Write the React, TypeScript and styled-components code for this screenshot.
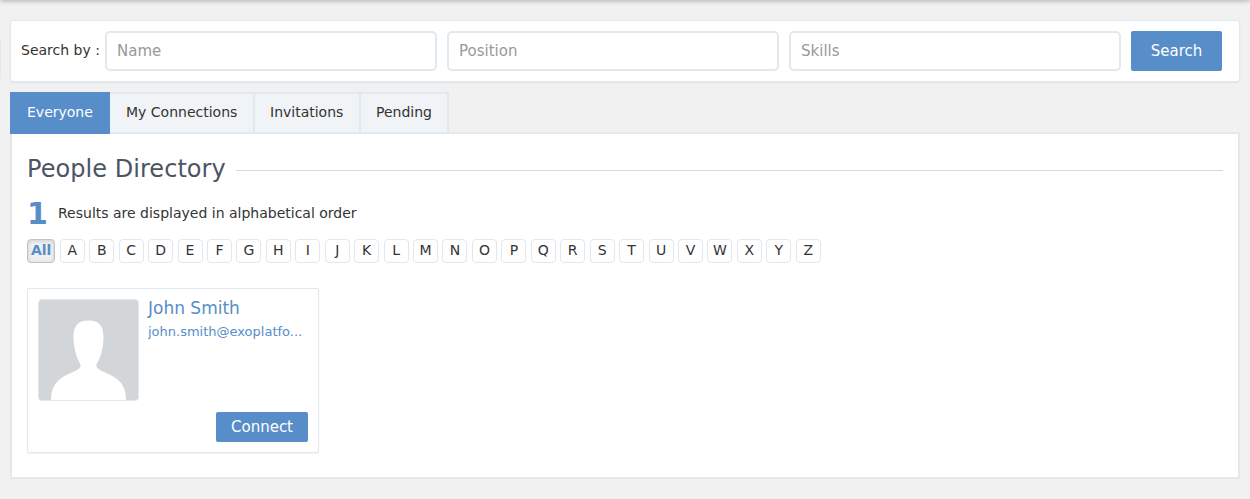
import React from "react";
import styled, { createGlobalStyle } from "styled-components";

const GlobalStyle = createGlobalStyle`
  * { box-sizing: border-box; }
  html, body { margin: 0; background: #f1f1f1; }
  body {
    font-family: "DejaVu Sans", sans-serif;
    font-size: 14px;
    line-height: 20px;
    color: #333;
    overflow: hidden;
  }
`;

const Page = styled.div`
  position: relative;
  height: 499px;
  padding: 20px 10px;
`;

const TopShadow = styled.div`
  position: absolute;
  top: -10px;
  left: 0;
  right: 0;
  height: 10px;
  box-shadow: 0 1px 5px rgba(0, 0, 0, 0.28);
`;

const SideHandle = styled.div`
  position: absolute;
  top: 39px;
  left: 0;
  width: 1px;
  height: 40px;
  background: #e8e8e8;
`;

const SearchBar = styled.form`
  display: flex;
  align-items: center;
  height: 62px;
  padding: 0 17px 0 10px;
  background: #fff;
  border: 1px solid #e1e8ee;
  border-radius: 3px;
  box-shadow: 0 1px 2px rgba(0, 0, 0, 0.06);
`;

const SearchLabel = styled.label`
  width: 84px;
  padding-bottom: 2px;
  white-space: nowrap;
`;

const Field = styled.input`
  width: 332px;
  height: 40px;
  margin-right: 10px;
  padding: 0 10px;
  border: 2px solid #e1e8ee;
  border-radius: 5px;
  background: #fff;
  font: 15px/20px "DejaVu Sans", sans-serif;
  outline: none;
  &::placeholder { color: #999; opacity: 1; }
`;

const Button = styled.button<{ $width: number; $height: number }>`
  width: ${(p) => p.$width}px;
  height: ${(p) => p.$height}px;
  flex: none;
  padding: 0;
  border: 0;
  border-radius: 2px;
  background: #578dc9;
  color: #fff;
  font: 15px/20px "DejaVu Sans", sans-serif;
`;

const Tabs = styled.nav`
  display: flex;
  height: 42px;
  margin-top: 10px;
`;

const Tab = styled.a<{ $active?: boolean; $width: number; $inset?: number }>`
  width: ${(p) => p.$width}px;
  padding: ${(p) => (p.$active ? 10 : 8)}px 0 0 ${(p) => p.$inset ?? 15}px;
  background: ${(p) => (p.$active ? "#578dc9" : "#f0f4f7")};
  color: ${(p) => (p.$active ? "#fff" : "#333")};
  border: solid #e1e8ee;
  border-width: ${(p) => (p.$active ? "0" : "2px 2px 2px 0")};
  white-space: nowrap;
`;

const Panel = styled.main`
  height: 347px;
  margin-top: -2px;
  padding: 20px 15px 0;
  background: #fff;
  border: 2px solid #e1e8ee;
  border-radius: 0 0 2px 2px;
`;

const PanelWrap = styled.section`
  display: flex;
  flex-direction: column;
  ${Tabs} { z-index: 1; }
`;

const Heading = styled.div`
  display: flex;
  align-items: center;
  height: 30px;
  &::after {
    content: "";
    flex: 1;
    height: 1px;
    margin: 3px 0 0 10px;
    background: #d8d8d8;
  }
`;

const Title = styled.h4`
  margin: 0;
  width: 199px;
  font-size: 24px;
  letter-spacing: 0.05px;
  white-space: nowrap;
  font-weight: normal;
  line-height: 30px;
  color: #4d5466;
`;

const Summary = styled.div`
  display: flex;
  align-items: center;
  height: 30px;
  margin-top: 14px;
`;

const Count = styled.strong`
  width: 31px;
  padding-top: 2px;
  font-size: 30px;
  line-height: 30px;
  color: #578dc9;
`;

const Letters = styled.div`
  display: flex;
  gap: 4.44px;
  margin-top: 11px;
`;

const Letter = styled.a<{ $active?: boolean }>`
  width: ${(p) => (p.$active ? 28.36 : 25)}px;
  height: 24px;
  flex: none;
  text-align: center;
  line-height: 20px;
  border: 1px solid ${(p) => (p.$active ? "#c3c3c3" : "#e1e8ee")};
  border-radius: 4px;
  background: ${(p) => (p.$active ? "#f0f0f0" : "#fff")};
  color: ${(p) => (p.$active ? "#578dc9" : "#333")};
  font-weight: ${(p) => (p.$active ? "bold" : "normal")};
  box-shadow: ${(p) => (p.$active ? "inset 0 1px 4px rgba(0, 0, 0, 0.15)" : "none")};
`;

const Card = styled.article`
  display: flex;
  flex-direction: column;
  justify-content: space-between;
  align-items: flex-end;
  width: 292px;
  height: 165px;
  margin-top: 25px;
  padding: 10px;
  border: 1px solid #e1e8ee;
  border-radius: 2px;
  box-shadow: 0 1px 2px rgba(0, 0, 0, 0.06);
`;

const Person = styled.div`
  display: flex;
  width: 100%;
`;

const Avatar = styled.div`
  width: 101px;
  height: 102px;
  flex: none;
  border: 1px solid #e1e8ee;
  border-radius: 4px;
  background: #d2d6d9;
  overflow: hidden;
  svg { display: block; }
`;

const Details = styled.div`
  width: 155px;
  margin-left: 9px;
  color: #578dc9;
`;

const Name = styled.div`
  font-size: 17px;
  line-height: 20px;
  margin-top: -1px;
`;

const Email = styled.div`
  margin-top: 4px;
  font-size: 13px;
  line-height: 20px;
  white-space: nowrap;
  overflow: hidden;
`;

const alphabet = "ABCDEFGHIJKLMNOPQRSTUVWXYZ".split("");

export default function App() {
  return (
    <Page>
      <GlobalStyle />
      <TopShadow />
      <SideHandle />
      <SearchBar>
        <SearchLabel>Search by :</SearchLabel>
        <Field placeholder="Name" />
        <Field placeholder="Position" />
        <Field placeholder="Skills" />
        <Button type="button" $width={91} $height={40}>Search</Button>
      </SearchBar>
      <PanelWrap>
        <Tabs>
          <Tab $active $width={100} $inset={17}>Everyone</Tab>
          <Tab $width={145} $inset={16}>My Connections</Tab>
          <Tab $width={106}>Invitations</Tab>
          <Tab $width={88}>Pending</Tab>
        </Tabs>
        <Panel>
          <Heading><Title>People Directory</Title></Heading>
          <Summary>
            <Count>1</Count>
            <span>Results are displayed in alphabetical order</span>
          </Summary>
          <Letters>
            <Letter $active>All</Letter>
            {alphabet.map((l) => <Letter key={l}>{l}</Letter>)}
          </Letters>
          <Card>
            <Person>
              <Avatar>
                <svg width="99" height="100" viewBox="0 0 99 100" aria-hidden="true">
                  <path
                    fill="#fff"
                    d="M12 100C12 90 15 84 21 79C27 74.500 34 72.500 38 70C41.500 68 42.500 66 41 63.500C36.500 56 34.500 45 34.500 37C34.500 26 39 20.500 49.500 20.500C60 20.500 64.500 26 64.500 37C64.500 46 62.500 56 58 63.500C56.500 66 57.500 68 61 70C65 72.500 72 74.500 78 79C84 84 87 90 87 100Z"
                  />
                </svg>
              </Avatar>
              <Details>
                <Name>John Smith</Name>
                <Email>john.smith@exoplatfo...</Email>
              </Details>
            </Person>
            <Button type="button" $width={92} $height={30}>Connect</Button>
          </Card>
        </Panel>
      </PanelWrap>
    </Page>
  );
}
